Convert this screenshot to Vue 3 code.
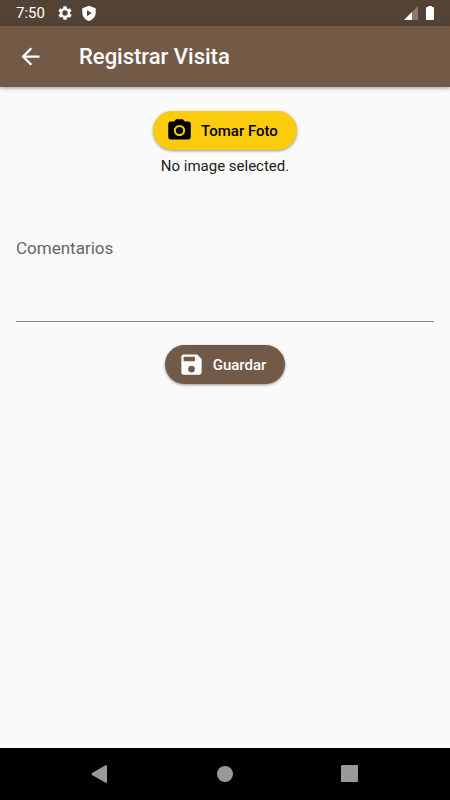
<script setup>
import { ref } from 'vue';

const comments = ref('');
</script>

<template>
	<div class="screen">
		<div class="status-bar">
			<span class="clock">7:50</span>
			<svg class="status-icon" viewBox="0 0 24 24" aria-hidden="true">
				<path fill-rule="evenodd" d="M19.4 13a7.8 7.8 0 0 0 0-2l2.1-1.6a.5.5 0 0 0 .1-.7l-2-3.4a.5.5 0 0 0-.6-.2l-2.5 1a7.3 7.3 0 0 0-1.7-1L14.500 2.400a.5.5 0 0 0-.5-.4h-4a.5.5 0 0 0-.5.4l-.4 2.700a7.700 7.700 0 0 0-1.700 1l-2.500-1a.5.5 0 0 0-.6.2l-2 3.400a.5.5 0 0 0 .1.7L4.500 11a7.900 7.900 0 0 0 0 2l-2.100 1.600a.5.5 0 0 0-.1.7l2 3.400c.1.2.4.3.6.2l2.500-1a7.300 7.300 0 0 0 1.700 1l.4 2.700c0 .2.200.4.5.4h4c.3 0 .5-.2.5-.4l.4-2.700a7.700 7.700 0 0 0 1.700-1l2.500 1c.2.1.5 0 .6-.2l2-3.400a.5.5 0 0 0-.1-.7zM12 16a4 4 0 1 1 0-8 4 4 0 0 1 0 8z" />
			</svg>
			<svg class="status-icon shield" viewBox="0 0 24 24" aria-hidden="true">
				<path fill-rule="evenodd" d="M12 1L2 5v7c0 5 4 10 10 12 6-2 10-7 10-12V5zM9 8l7 4-7 5z" />
			</svg>
			<svg class="signal" viewBox="0 0 14 14" aria-hidden="true">
				<path class="faded" d="M14 0v14H0z" />
				<path d="M8 6v8H0z" />
			</svg>
			<svg class="battery" viewBox="0 0 10 16" aria-hidden="true">
				<path d="M3 1h4v1h1q1 0 1 1v11q0 1-1 1H2q-1 0-1-1V3q0-1 1-1h1z" />
			</svg>
		</div>

		<header class="app-bar">
			<button class="back" type="button" aria-label="Volver">
				<svg viewBox="0 0 24 24">
					<path d="M20 11H7.830l5.590-5.590L12 4l-8 8 8 8 1.410-1.410L7.830 13H20z" />
				</svg>
			</button>
			<h1 class="title">Registrar Visita</h1>
		</header>

		<main class="content">
			<button class="pill photo" type="button">
				<svg viewBox="0 0 24 24" aria-hidden="true">
					<path fill-rule="evenodd" d="M9 2L7.170 4H4c-1.100 0-2 .9-2 2v12c0 1.100.9 2 2 2h16c1.100 0 2-.9 2-2V6c0-1.100-.9-2-2-2h-3.170L15 2zm3 15a5 5 0 1 1 0-10 5 5 0 0 1 0 10z" />
					<circle cx="12" cy="12" r="3.200" />
				</svg>
				Tomar Foto
			</button>
			<p class="hint">No image selected.</p>

			<div class="field">
				<label for="comments">Comentarios</label>
				<textarea id="comments" v-model="comments" rows="2"></textarea>
			</div>

			<button class="pill save" type="button">
				<svg viewBox="0 0 24 24" aria-hidden="true">
					<path fill-rule="evenodd" d="M17 3H5a2 2 0 0 0-2 2v14a2 2 0 0 0 2 2h14c1.100 0 2-.9 2-2V7zm-5 16a3 3 0 1 1 0-6 3 3 0 0 1 0 6zm3-10H5V5h10z" />
				</svg>
				Guardar
			</button>
		</main>

		<nav class="nav-bar">
			<button type="button" aria-label="Atrás">
				<svg viewBox="0 0 18 18"><path d="M15 0q1 0 1 1v16q0 1-1 1L1 10q-1-1 0-2z" /></svg>
			</button>
			<button type="button" aria-label="Inicio">
				<svg viewBox="0 0 18 18"><circle cx="9" cy="9" r="8" /></svg>
			</button>
			<button type="button" aria-label="Recientes">
				<svg viewBox="0 0 18 18"><rect width="17" height="17" rx="1" /></svg>
			</button>
		</nav>
	</div>
</template>

<style>
body {
	margin: 0;
	background: #fafafa;
}
</style>

<style scoped>
.screen {
	display: flex;
	flex-direction: column;
	min-height: 100vh;
	background: #fafafa;
	font-family: Roboto, sans-serif;
}

svg {
	display: block;
	flex-shrink: 0;
	fill: currentColor;
}

button {
	border: 0;
	padding: 0;
	background: none;
	color: inherit;
	font-family: inherit;
	cursor: pointer;
}

.status-bar {
	display: flex;
	align-items: center;
	height: 26px;
	padding: 0 15px 0 16px;
	box-sizing: border-box;
	background: #544334;
	color: #fff;
}

.clock {
	margin-right: 12px;
	font-size: 15px;
	line-height: 26px;
}

.status-icon {
	width: 16px;
	height: 16px;
}

.shield {
	margin-left: 8px;
}

.signal {
	width: 14px;
	height: 14px;
	margin-left: auto;
}

.faded {
	opacity: 0.3;
}

.battery {
	width: 10px;
	height: 16px;
	margin-left: 7px;
}

.app-bar {
	display: flex;
	align-items: center;
	gap: 35px;
	height: 61px;
	padding: 0 17px;
	background: #725a47;
	color: #fff;
	box-shadow: 0 1px 4px rgba(0, 0, 0, 0.4);
}

.back svg {
	width: 27px;
	height: 27px;
}

.title {
	margin: 0;
	font-size: 22px;
	font-weight: 500;
	line-height: 28px;
}

.content {
	display: flex;
	flex: 1;
	flex-direction: column;
	align-items: center;
	padding: 24px 16px;
}

.pill {
	display: flex;
	align-items: center;
	gap: 8px;
	height: 39px;
	padding: 0 19px 0 13px;
	border-radius: 20px;
	font-size: 15px;
	font-weight: 500;
	box-shadow: 0 1px 3px rgba(0, 0, 0, 0.4);
}

.pill svg {
	width: 27px;
	height: 27px;
}

.photo {
	background: #fbcc0d;
	color: #000;
}

.save {
	background: #725a47;
	color: #fff;
}

.hint {
	margin: 6px 0 0;
	color: #212121;
	font-size: 15px;
	line-height: 20px;
}

.field {
	display: flex;
	flex-direction: column;
	align-self: stretch;
	margin: 62px 0 23px;
}

.field label {
	color: #666;
	font-size: 17px;
	line-height: 20px;
}

.field textarea {
	height: 64px;
	padding: 0;
	box-sizing: border-box;
	border: 0;
	border-bottom: 1px solid #888;
	outline: none;
	resize: none;
	background: transparent;
	font-family: inherit;
	font-size: 17px;
}

.nav-bar {
	display: flex;
	align-items: center;
	justify-content: center;
	gap: 107px;
	height: 52px;
	background: #000;
	color: #999;
}

.nav-bar svg {
	width: 18px;
	height: 18px;
}
</style>
